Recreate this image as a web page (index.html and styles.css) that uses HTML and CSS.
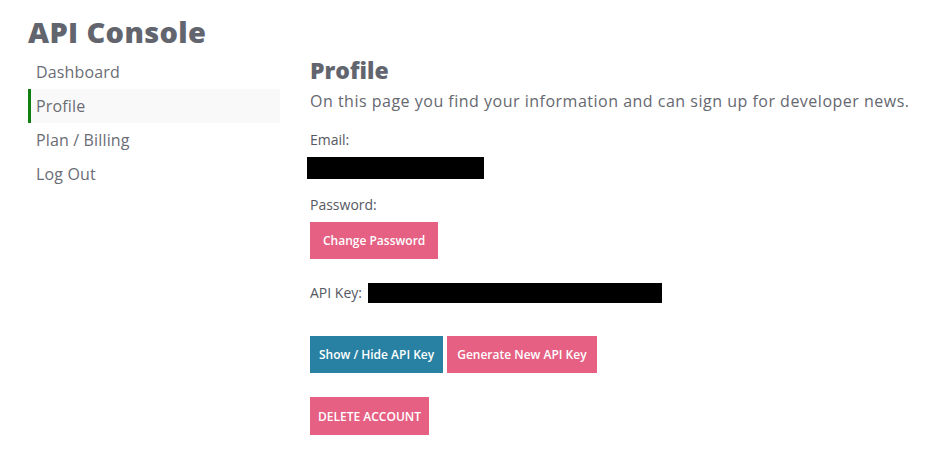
FILE: index.html
```html
<!DOCTYPE html>
<html>
<head>
<meta charset="utf-8">
<link rel="stylesheet" href="styles.css">
</head>
<body>
<div class="page">
  <h1 class="brand">API Console</h1>
  <div class="layout">
    <nav class="sidebar">
      <a class="nav-item">Dashboard</a>
      <a class="nav-item active">Profile</a>
      <a class="nav-item">Plan / Billing</a>
      <a class="nav-item">Log Out</a>
    </nav>
    <main class="content">
      <h2 class="title">Profile</h2>
      <p class="lead">On this page you find your information and can sign up for developer news.</p>
      <div class="label label-email">Email:</div>
      <div class="redact redact-email"></div>
      <div class="label label-pw">Password:</div>
      <div class="btn-row btn-row-pw"><button class="btn pink wide">Change Password</button></div>
      <div class="key-row"><span class="label">API Key:</span><span class="redact redact-key"></span></div>
      <div class="btn-row btn-row-keys">
        <button class="btn blue">Show / Hide API Key</button>
        <button class="btn pink">Generate New API Key</button>
      </div>
      <div class="btn-row btn-row-del"><button class="btn pink del">DELETE ACCOUNT</button></div>
    </main>
  </div>
</div>
</body>
</html>
```
FILE: styles.css
```css
* { box-sizing: border-box; }
body {
  margin: 0;
  background: #fff;
  font-family: "Open Sans", "Noto Sans", sans-serif;
  color: #666870;
}
.page { padding: 12px 0 0 28px; }
.brand {
  margin: 0;
  font-size: 29px;
  font-weight: 800;
  color: #62656e;
  line-height: 40px;
  letter-spacing: 0.35px;
}
.layout {
  display: flex;
  margin-top: 3px;
}
.sidebar {
  width: 252px;
  display: flex;
  flex-direction: column;
}
.nav-item {
  display: block;
  height: 34px;
  line-height: 34px;
  padding-left: 8px;
  font-size: 16px;
  color: #6a6d75;
  letter-spacing: 0.15px;
}
.nav-item.active {
  background: #f9f9f9;
  border-left: 3px solid #108010;
  padding-left: 5px;
}
.content {
  padding-left: 30px;
  flex: 1;
}
.title {
  margin: 0;
  font-size: 23px;
  font-weight: 800;
  color: #62656e;
  line-height: 30px;
}
.lead {
  margin: 4px 0 0;
  font-size: 16px;
  line-height: 24px;
  letter-spacing: 0.5px;
}
.label {
  font-size: 14px;
  line-height: 20px;
  color: #55585f;
}
.label-email { margin-top: 17px; }
.redact {
  display: block;
  background: #000;
}
.redact-email {
  width: 177px;
  height: 22px;
  margin-left: -3px;
  margin-top: 7px;
}
.label-pw { margin-top: 16px; }
.btn-row {
  display: flex;
  gap: 4px;
}
.btn {
  border: none;
  font-family: inherit;
  font-size: 12px;
  font-weight: 600;
  color: #fff;
  height: 37px;
  padding: 0 10px;
  cursor: pointer;
}
.btn.wide { padding: 0 13px; }
.btn-row-pw { margin-top: 7px; }
.pink { background: #e56083; }
.blue { background: #2880a2; padding: 0 9px; }
.key-row {
  display: flex;
  align-items: center;
  margin-top: 24px;
}
.redact-key {
  width: 294px;
  height: 20px;
  margin-left: 6px;
}
.btn-row-keys { margin-top: 33px; }
.btn-row-del { margin-top: 24px; }
.del { height: 38px; padding: 0 8px; }
```
